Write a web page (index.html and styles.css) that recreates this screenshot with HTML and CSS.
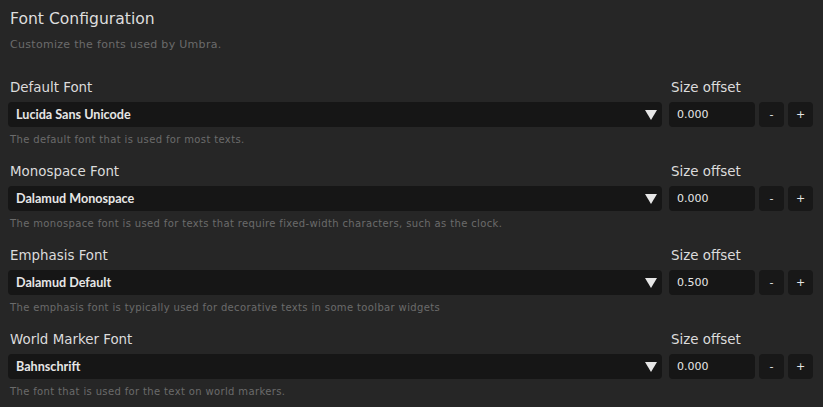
FILE: index.html
```html
<!DOCTYPE html>
<html>
<head>
<meta charset="utf-8">
<link rel="stylesheet" href="styles.css">
</head>
<body>
<div class="page">
  <div class="title">Font Configuration</div>
  <div class="subtitle">Customize the fonts used by Umbra.</div>

  <div class="section">
    <div class="row labels"><span class="label grow">Default Font</span><span class="label size">Size offset</span></div>
    <div class="row">
      <div class="select grow"><span>Lucida Sans Unicode</span><span class="arrow"></span></div>
      <div class="input">0.000</div>
      <div class="btn">-</div>
      <div class="btn">+</div>
    </div>
    <div class="help">The default font that is used for most texts.</div>
  </div>

  <div class="section">
    <div class="row labels"><span class="label grow">Monospace Font</span><span class="label size">Size offset</span></div>
    <div class="row">
      <div class="select grow"><span>Dalamud Monospace</span><span class="arrow"></span></div>
      <div class="input">0.000</div>
      <div class="btn">-</div>
      <div class="btn">+</div>
    </div>
    <div class="help">The monospace font is used for texts that require fixed-width characters, such as the clock.</div>
  </div>

  <div class="section">
    <div class="row labels"><span class="label grow">Emphasis Font</span><span class="label size">Size offset</span></div>
    <div class="row">
      <div class="select grow"><span>Dalamud Default</span><span class="arrow"></span></div>
      <div class="input">0.500</div>
      <div class="btn">-</div>
      <div class="btn">+</div>
    </div>
    <div class="help">The emphasis font is typically used for decorative texts in some toolbar widgets</div>
  </div>

  <div class="section">
    <div class="row labels"><span class="label grow">World Marker Font</span><span class="label size">Size offset</span></div>
    <div class="row">
      <div class="select grow"><span>Bahnschrift</span><span class="arrow"></span></div>
      <div class="input">0.000</div>
      <div class="btn">-</div>
      <div class="btn">+</div>
    </div>
    <div class="help">The font that is used for the text on world markers.</div>
  </div>
</div>
</body>
</html>
```
FILE: styles.css
```css
html, body {
  margin: 0;
  padding: 0;
  background: #262626;
}
body {
  font-family: "DejaVu Sans", "Noto Sans", sans-serif;
  color: #dcdcdc;
}
.page {
  padding: 9px 10px 0 8px;
}
.title {
  font-size: 15.6px;
  line-height: 20px;
  margin-left: 2px;
  color: #dedede;
}
.subtitle {
  font-size: 11px;
  line-height: 16px;
  margin-top: 8px;
  margin-left: 2px;
  color: #6b6b6b;
  letter-spacing: 0.3px;
}
.section {
  margin-top: 24px;
}
.section + .section {
  margin-top: 13px;
}
.row {
  display: flex;
  align-items: center;
}
.grow {
  flex: 1;
}
.label {
  font-size: 13.4px;
  line-height: 20px;
  color: #dcdcdc;
}
.labels .label.grow {
  margin-left: 2px;
}
.labels .label.size {
  width: 142px;
}
.labels {
  padding-top: 1px;
  margin-bottom: 4px;
}
.select {
  height: 25px;
  background: #161616;
  border-radius: 4px;
  display: flex;
  align-items: center;
  justify-content: space-between;
  padding: 0 5px 0 8px;
  font-family: "Lato", "DejaVu Sans", sans-serif;
  font-size: 12.6px;
  font-weight: bold;
  color: #e6e6e6;
}
.arrow {
  width: 0;
  height: 0;
  border-left: 6px solid transparent;
  border-right: 6px solid transparent;
  border-top: 10px solid #e6e6e6;
}
.input {
  width: 78px;
  height: 25px;
  margin-left: 7px;
  padding-left: 8px;
  background: #161616;
  border-radius: 4px;
  display: flex;
  align-items: center;
  font-size: 11px;
  color: #e6e6e6;
}
.btn {
  width: 25px;
  height: 25px;
  margin-left: 4px;
  background: #181818;
  border-radius: 4px;
  display: flex;
  align-items: center;
  justify-content: center;
  font-size: 11px;
  color: #e6e6e6;
}
.help {
  margin-top: 5px;
  margin-left: 2px;
  font-size: 10px;
  line-height: 16px;
  color: #6b6b6b;
  letter-spacing: 0.36px;
}
```
